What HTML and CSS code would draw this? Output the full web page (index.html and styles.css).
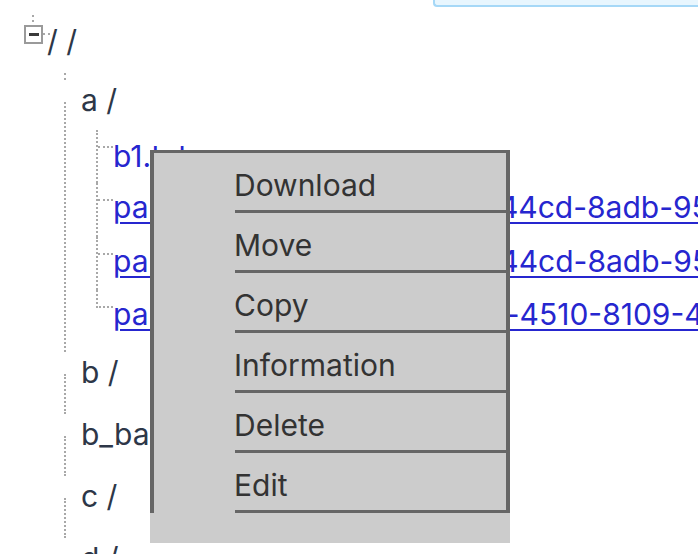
FILE: index.html
```html
<!DOCTYPE html>
<html>
<head>
<meta charset="utf-8">
<link rel="stylesheet" href="styles.css">
</head>
<body>
<div class="banner"></div>
<div class="tree">
  <div class="root-stub"></div>
  <div class="root-row">
    <span class="toggle"><span class="minus"></span></span>
    <span class="root-conn"></span>
    <span class="label root-label">/ /</span>
  </div>
  <ul class="l1">
    <li class="l1-stub"></li>
    <li class="l1-item">
      <span class="label l1-label">a /</span>
      <ul class="l2">
        <li class="l2-item first"><span class="elbow"></span><span class="label file">b1.txt</span></li>
        <li class="l2-item"><span class="elbow"></span><a class="label link" href="#">part-00000-5b7e1c1a-31f1-44cd-8adb-95e4f7a1c3d2-c000.snappy.parquet</a></li>
        <li class="l2-item"><span class="elbow"></span><a class="label link" href="#">part-00001-5b7e1c2a-31f1-44cd-8adb-95e4f7a1c3d2-c000.snappy.parquet</a></li>
        <li class="l2-item last"><span class="elbow"></span><a class="label link" href="#">part-00000-d81f6a3b-7c2e-4510-8109-4a6b2c9e8f01-c000.snappy.parquet</a></li>
      </ul>
    </li>
    <li class="l1-item leaf"><span class="label l1-label">b /</span></li>
    <li class="l1-item leaf"><span class="label l1-label">b_backup /</span></li>
    <li class="l1-item leaf"><span class="label l1-label">c /</span></li>
    <li class="l1-item leaf"><span class="label l1-label">d /</span></li>
  </ul>
</div>
<div class="menu">
  <ul class="menu-list">
    <li class="menu-item">Download</li>
    <li class="menu-item">Move</li>
    <li class="menu-item">Copy</li>
    <li class="menu-item">Information</li>
    <li class="menu-item">Delete</li>
    <li class="menu-item">Edit</li>
  </ul>
</div>
</body>
</html>
```

FILE: styles.css
```css
html {
  overflow: hidden;
}
body {
  margin: 0;
  font-family: Inter, "Noto Sans", sans-serif;
  font-size: 30px;
  color: #2d3748;
  background: #fff;
  position: relative;
  white-space: nowrap;
}
ul {
  list-style: none;
  margin: 0;
  padding: 0;
}
.banner {
  margin-left: 433px;
  height: 5px;
  background: #e8f6fe;
  border-left: 2px solid #a6d8f7;
  border-bottom: 2px solid #a6d8f7;
  border-bottom-left-radius: 4px;
}
.tree {
  padding-left: 24px;
}
.label {
  display: block;
  line-height: 36px;
}
.root-stub {
  margin-top: 8px;
  margin-left: 8px;
  width: 0;
  height: 7px;
  border-left: 2px dotted #a8a8a8;
}
.root-row {
  display: flex;
  align-items: flex-start;
  margin-top: 3px;
}
.toggle {
  box-sizing: border-box;
  width: 19px;
  height: 19px;
  border: 2px solid #9a9a9a;
  background: #fff;
  display: flex;
  align-items: center;
  justify-content: center;
  flex: none;
}
.minus {
  width: 10px;
  height: 3px;
  background: #3a3a3a;
}
.root-conn {
  width: 7px;
  margin-top: 8px;
  border-top: 2px dotted #a8a8a8;
  flex: none;
}
.root-label {
  margin-top: -2px;
  margin-left: -3px;
}
.l1 {
  margin-left: 40px;
}
.l1-stub {
  margin-top: 14px;
  width: 0;
  height: 7px;
  border-left: 2px dotted #a8a8a8;
}
.l1-item {
  display: flow-root;
  margin-top: 22px;
  border-left: 2px dotted #a8a8a8;
}
.l1-item.leaf {
  height: 40px;
}
.l1-label {
  margin-top: -20px;
  padding-left: 15px;
}
.l2 {
  margin-top: 12px;
  margin-left: 30px;
  padding-bottom: 9px;
}
.l2-item {
  display: flex;
  align-items: flex-start;
  height: 53.33px;
  border-left: 2px dotted #a8a8a8;
}
.l2-item.last {
  border-left-color: transparent;
}
.elbow {
  flex: none;
  width: 15px;
  height: 16px;
  border-bottom: 2px dotted #a8a8a8;
}
.l2-item.last .elbow {
  margin-left: -2px;
  border-left: 2px dotted #a8a8a8;
}
.l2-item .label {
  margin-top: 6px;
  color: #2626cf;
}
.l2-item.first .label {
  margin-top: 8px;
}
.link {
  text-decoration: underline;
  text-decoration-thickness: 2px;
  text-underline-offset: 4px;
}
.menu {
  position: absolute;
  left: 150px;
  top: 150px;
  width: 360px;
  background: #cccccc;
  padding-bottom: 30px;
}
.menu-list {
  border: 4px solid #666666;
  border-top-width: 3px;
  border-bottom: none;
  padding-left: 81px;
}
.menu-item {
  height: 50px;
  padding-top: 7px;
  line-height: 50px;
  border-bottom: 3px solid #666666;
  color: #333333;
  text-indent: -1px;
}
```
